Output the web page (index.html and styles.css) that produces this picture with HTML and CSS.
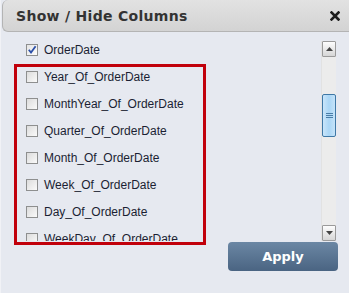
FILE: index.html
```html
<!DOCTYPE html>
<html lang="en">
<head>
    <meta charset="UTF-8">
    <title>Show / Hide Columns</title>
    <link rel="stylesheet" href="styles.css">
</head>
<body>
    <div class="dialog">
        <div class="dialog-header">
            <span class="title">Show / Hide Columns</span>
            <button class="close" title="Close">
                <svg width="10" height="10" viewBox="0 0 10 10">
                    <path d="M1.5 1.5 L8.5 8.5 M8.5 1.5 L1.5 8.5" stroke="#1e1e1e" stroke-width="2.6" stroke-linecap="square"/>
                </svg>
            </button>
        </div>
        <div class="dialog-body">
            <div class="column-picker">
                <ul class="column-list">
                    <li><span class="check checked">
                        <svg width="10" height="10" viewBox="0 0 10 10"><path d="M1.8 4.8 L4 7.6 L8.6 1.2" fill="none" stroke="#2b4fa8" stroke-width="1.8"/></svg>
                    </span>OrderDate</li>
                    <li><span class="check"></span>Year_Of_OrderDate</li>
                    <li><span class="check"></span>MonthYear_Of_OrderDate</li>
                    <li><span class="check"></span>Quarter_Of_OrderDate</li>
                    <li><span class="check"></span>Month_Of_OrderDate</li>
                    <li><span class="check"></span>Week_Of_OrderDate</li>
                    <li><span class="check"></span>Day_Of_OrderDate</li>
                    <li><span class="check"></span>WeekDay_Of_OrderDate</li>
                </ul>
                <div class="scrollbar">
                    <span class="scroll-btn">
                        <svg width="7" height="4" viewBox="0 0 7 4"><path d="M0 4 L3.5 0 L7 4 Z" fill="#444"/></svg>
                    </span>
                    <div class="track">
                        <span class="thumb"><i></i><i></i><i></i></span>
                    </div>
                    <span class="scroll-btn">
                        <svg width="7" height="4" viewBox="0 0 7 4"><path d="M0 0 L7 0 L3.5 4 Z" fill="#444"/></svg>
                    </span>
                </div>
            </div>
            <div class="highlight"></div>
            <div class="actions">
                <button class="apply">Apply</button>
            </div>
        </div>
    </div>
</body>
</html>
```

FILE: styles.css
```css
* {
    margin: 0;
    padding: 0;
    box-sizing: border-box;
}

body {
    font-family: "Liberation Sans", Arial, sans-serif;
    background: #e6e9f0;
    width: 349px;
    height: 293px;
    overflow: hidden;
}

.dialog {
    position: relative;
    height: 293px;
    background: #e6e9f0;
    border-left: 1px solid #f1f2f6;
}

.dialog-header {
    height: 32px;
    margin-left: 1px;
    display: flex;
    align-items: center;
    justify-content: space-between;
    padding: 0 9px 0 13px;
    background: linear-gradient(#e2e2e2, #d3d3d3);
    border: 1px solid #b4b4b4;
    border-top: none;
    border-right: none;
    border-radius: 6px 0 0 6px;
}

.title {
    font-family: "DejaVu Sans", Verdana, sans-serif;
    font-weight: bold;
    font-size: 14px;
    letter-spacing: 0.3px;
    color: #333;
    padding-top: 1px;
}

.close {
    border: none;
    background: none;
    width: 10px;
    height: 10px;
    display: flex;
    cursor: pointer;
}

.dialog-body {
    padding-top: 4px;
}

.column-picker {
    display: flex;
    margin-left: 13px;
    width: 322px;
    height: 205px;
}

.column-list {
    list-style: none;
    flex: 1;
    overflow: hidden;
}

.column-list li {
    height: 27px;
    display: flex;
    align-items: center;
    padding-left: 12px;
    font-size: 12px;
    color: #1b1f33;
}

.check {
    width: 12px;
    height: 12px;
    margin-right: 6px;
    border: 1px solid #8e8f8f;
    background: linear-gradient(135deg, #dcdcdc, #fafafa);
    display: flex;
    align-items: center;
    justify-content: center;
}

.check.checked {
    background: linear-gradient(135deg, #e4e4e4, #fdfdfd);
}

.scrollbar {
    width: 15px;
    margin-top: 5px;
    display: flex;
    flex-direction: column;
    background: #ececec;
    border-left: 1px solid #e2e2e2;
}

.scroll-btn {
    height: 16px;
    display: flex;
    align-items: center;
    justify-content: center;
    border: 1px solid #9a9a9a;
    background: linear-gradient(#fdfdfd, #d6d6d6);
    border-radius: 1px;
}

.track {
    flex: 1;
    padding-top: 37px;
}

.thumb {
    display: flex;
    flex-direction: column;
    align-items: center;
    justify-content: center;
    gap: 1px;
    height: 43px;
    border: 1px solid #3f78a6;
    border-radius: 2px;
    background: linear-gradient(90deg, #c9e5fa, #aad6f5 50%, #c5e3f9);
}

.thumb i {
    width: 7px;
    height: 1px;
    background: #4a7ea8;
}

.highlight {
    position: absolute;
    left: 13px;
    top: 64px;
    width: 192px;
    height: 181px;
    border: 3px solid #c1000b;
}

.actions {
    display: flex;
    justify-content: flex-end;
    padding: 1px 11px 0 0;
}

.apply {
    width: 110px;
    height: 29px;
    border: none;
    border-radius: 4px;
    background: linear-gradient(#6b87a4, #4a6482);
    color: #fff;
    font-family: "DejaVu Sans", Verdana, sans-serif;
    font-weight: bold;
    font-size: 13px;
    cursor: pointer;
}
```
